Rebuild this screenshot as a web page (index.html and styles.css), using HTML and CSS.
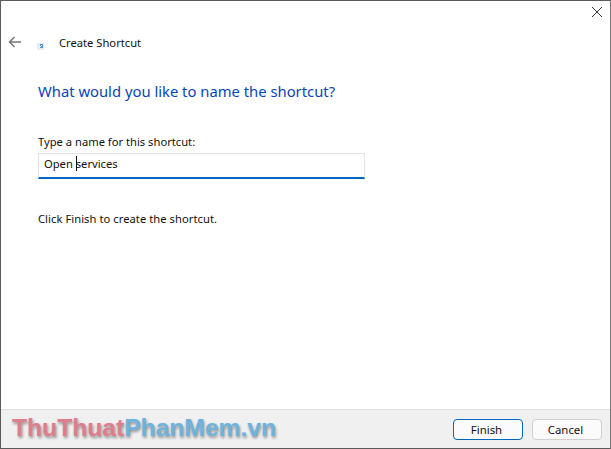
FILE: index.html
```html
<!DOCTYPE html>
<html lang="en">
<head>
    <meta charset="UTF-8">
    <meta name="viewport" content="width=device-width, initial-scale=1.0">
    <title>Create Shortcut</title>
    <link rel="stylesheet" href="styles.css">
</head>
<body>
    <div class="window">
        <div class="close-row">
            <svg class="close-icon" width="10" height="10" viewBox="0 0 10 10">
                <path d="M0 0L10 10M10 0L0 10" stroke="#333" stroke-width="1" fill="none"/>
            </svg>
        </div>
        <div class="title-row">
            <svg class="back-icon" width="13" height="12" viewBox="0 0 13 12">
                <path d="M13 6H1.5M6.5 1L1.5 6L6.5 11" stroke="#777" stroke-width="1.5" fill="none"/>
            </svg>
            <svg class="shortcut-icon" width="7" height="7" viewBox="0 0 7 7">
                <rect x="0" y="0" width="7" height="7" fill="#e6ebf2"/>
                <rect x="3" y="1" width="3" height="4" fill="#4a9be0"/>
                <path d="M2 5L5 2" stroke="#fff" stroke-width="1"/>
            </svg>
            <span class="title">Create Shortcut</span>
        </div>
        <main class="content">
            <h1>What would you like to name the shortcut?</h1>
            <label class="name-label" for="shortcutName">Type a name for this shortcut:</label>
            <div class="name-box">
                <span id="shortcutName">Open <span class="caret"></span>services</span>
            </div>
            <p class="hint">Click Finish to create the shortcut.</p>
        </main>
        <footer>
            <button class="btn btn-default">Finish</button>
            <button class="btn">Cancel</button>
        </footer>
        <div class="watermark"><span class="wm-red">ThuThuat</span><span class="wm-blue">PhanMem.vn</span></div>
    </div>
</body>
</html>
```

FILE: styles.css
```css
* {
    box-sizing: border-box;
}

html, body {
    margin: 0;
    padding: 0;
    background-color: white;
}

body {
    font-family: "Noto Sans", "Open Sans", sans-serif;
    font-size: 11.2px;
    color: #111;
}

.window {
    position: relative;
    width: 611px;
    height: 449px;
    display: flex;
    flex-direction: column;
    border: 1px solid #5a5a5a;
    border-right-color: #777;
    background-color: white;
}

.close-row {
    display: flex;
    justify-content: flex-end;
    height: 24px;
    padding: 6px 8px 0 0;
}

.title-row {
    display: flex;
    align-items: center;
    height: 36px;
    padding-left: 7px;
}

.back-icon {
    margin-top: -2px;
}

.shortcut-icon {
    margin: 7px 0 0 16px;
}

.title {
    margin-left: 15px;
    margin-top: -1px;
}

.content {
    flex: 1;
    padding: 0 0 0 37px;
}

h1 {
    margin: 20px 0 0;
    font-size: 14.8px;
    font-weight: 400;
    line-height: 20px;
    color: #0a44b8;
}

.name-label {
    display: block;
    margin-top: 33px;
    line-height: 16px;
}

.name-box {
    width: 327px;
    height: 26px;
    margin-top: 3px;
    padding: 1px 0 0 5px;
    line-height: 18px;
    border: 1px solid #e4e4e4;
    border-bottom: 2px solid #0067c0;
}

.caret {
    display: inline-block;
    width: 1px;
    height: 15px;
    margin-right: -1px;
    vertical-align: -3px;
    background-color: #111;
}

.hint {
    margin: 32px 0 0;
    line-height: 16px;
    letter-spacing: 0.05px;
}

footer {
    display: flex;
    justify-content: flex-end;
    gap: 9px;
    height: 39px;
    padding: 9px 8px 0 0;
    background-color: #f0f0f0;
    border-top: 1px solid #dfdfdf;
}

.btn {
    width: 70px;
    height: 21px;
    padding: 0 3px 0 0;
    font-family: inherit;
    font-size: 11.4px;
    color: #111;
    background-color: #fbfbfb;
    border: 1px solid #d0d0d0;
    border-radius: 4px;
}

.btn-default {
    border-color: #0067c0;
}

.watermark {
    position: absolute;
    left: 11px;
    top: 413px;
    font-family: "Liberation Sans", Arial, sans-serif;
    font-size: 24.8px;
    font-weight: 700;
    line-height: 28px;
    white-space: nowrap;
    letter-spacing: -0.1px;
    text-shadow: 1px 2px 3px rgba(0, 0, 0, 0.4);
}

.wm-red {
    color: #df7d8d;
}

.wm-blue {
    color: #6eb3de;
}
```
